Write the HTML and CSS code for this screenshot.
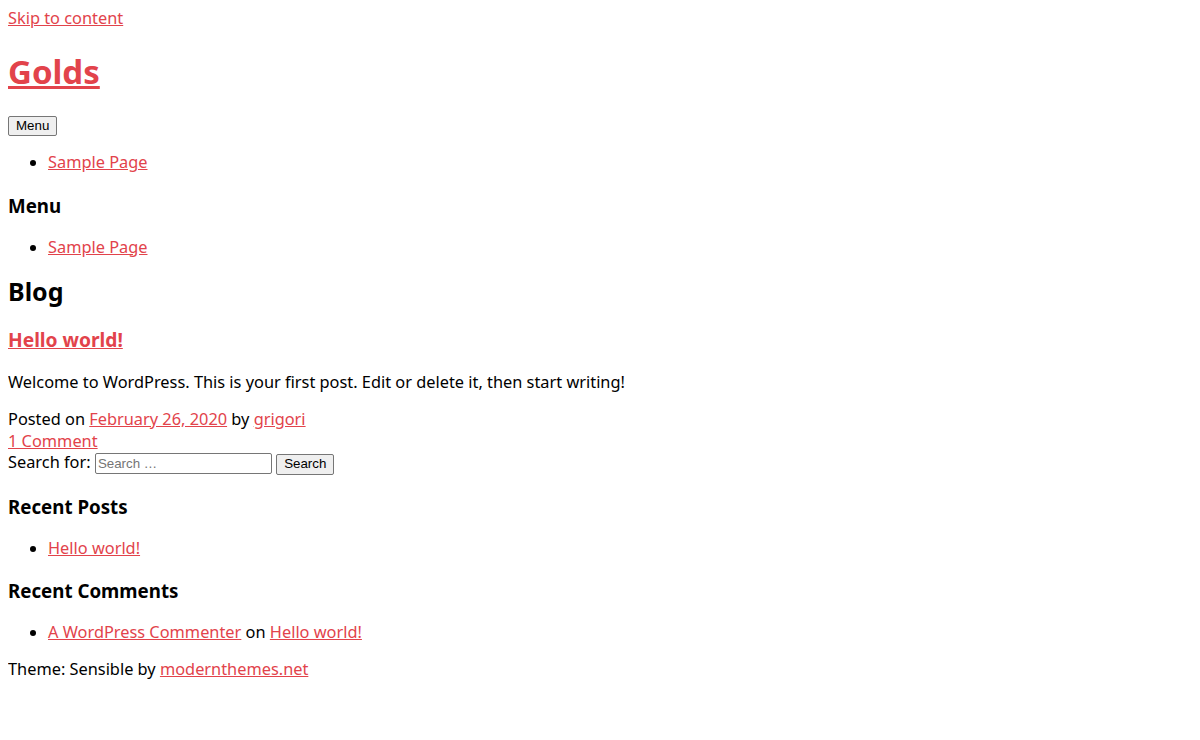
FILE: index.html
```html
<!DOCTYPE html>
<html lang="en">
<head>
<meta charset="utf-8">
<title>Golds</title>
<link rel="stylesheet" href="styles.css">
</head>
<body>
<a class="skip-link" href="#content">Skip to content</a>
<header class="site-header">
  <h1 class="site-title"><a href="#">Golds</a></h1>
  <nav class="main-nav">
    <button class="menu-toggle" type="button">Menu</button>
    <ul class="menu-list">
      <li><a href="#">Sample Page</a></li>
    </ul>
  </nav>
  <h3 class="widget-title">Menu</h3>
  <ul class="menu-list">
    <li><a href="#">Sample Page</a></li>
  </ul>
</header>
<main id="content" class="site-main">
  <h1 class="page-title">Blog</h1>
  <article class="post">
    <h2 class="entry-title"><a href="#">Hello world!</a></h2>
    <p class="entry-content">Welcome to WordPress. This is your first post. Edit or delete it, then start writing!</p>
    <div class="entry-meta">Posted on <a href="#">February 26, 2020</a> by <a href="#">grigori</a></div>
    <div class="entry-footer"><a href="#">1 Comment</a></div>
  </article>
</main>
<aside class="sidebar">
  <form class="search-form">
    <label>Search for: <input class="search-field" type="search" placeholder="Search …"></label>
    <button class="search-submit" type="button">Search</button>
  </form>
  <h3 class="widget-title">Recent Posts</h3>
  <ul class="menu-list">
    <li><a href="#">Hello world!</a></li>
  </ul>
  <h3 class="widget-title">Recent Comments</h3>
  <ul class="menu-list">
    <li><a href="#">A WordPress Commenter</a> on <a href="#">Hello world!</a></li>
  </ul>
</aside>
<footer class="site-footer">Theme: Sensible by <a href="#">modernthemes.net</a></footer>
</body>
</html>
```

FILE: styles.css
```css
body {
  margin: 8px;
  font-family: "Segoe UI", "Noto Sans", "Open Sans", sans-serif;
  font-size: 16.35px;
  line-height: 21.6px;
  color: #000;
  background: #fff;
}

a {
  color: #e2434b;
  text-decoration: underline;
}

.site-title {
  font-size: 33px;
  line-height: 1.3;
  font-weight: 700;
  margin: 21px 0;
}

.menu-toggle,
.search-submit {
  font-family: Arial, "Liberation Sans", sans-serif;
  font-size: 13.33px;
  line-height: 16px;
  padding: 1px 7px;
  border: 1px solid #767676;
  border-radius: 2px;
  background: #efefef;
  color: #000;
}

.menu-toggle {
  height: 20px;
}

.search-submit {
  height: 21px;
}

.menu-list {
  margin: 16px 0;
  padding-left: 40px;
}

.widget-title {
  font-size: 18.72px;
  line-height: 1.35;
  font-weight: 700;
  margin: 18.72px 0;
}

.page-title {
  font-size: 25px;
  line-height: 1.3;
  font-weight: 700;
  margin: 17px 0 19px;
}

.entry-title {
  font-size: 19.2px;
  line-height: 1.35;
  font-weight: 700;
  margin: 18.72px 0;
}

.entry-content {
  margin: 16px 0;
}

.search-form label {
  display: inline;
}

.search-field {
  font-family: Arial, "Liberation Sans", sans-serif;
  font-size: 13.33px;
  width: 177px;
  height: 21px;
  box-sizing: border-box;
  padding: 1px 2px;
  border: 1px solid #767676;
  border-radius: 2px;
}

.site-footer {
  margin-top: 15px;
}
```
